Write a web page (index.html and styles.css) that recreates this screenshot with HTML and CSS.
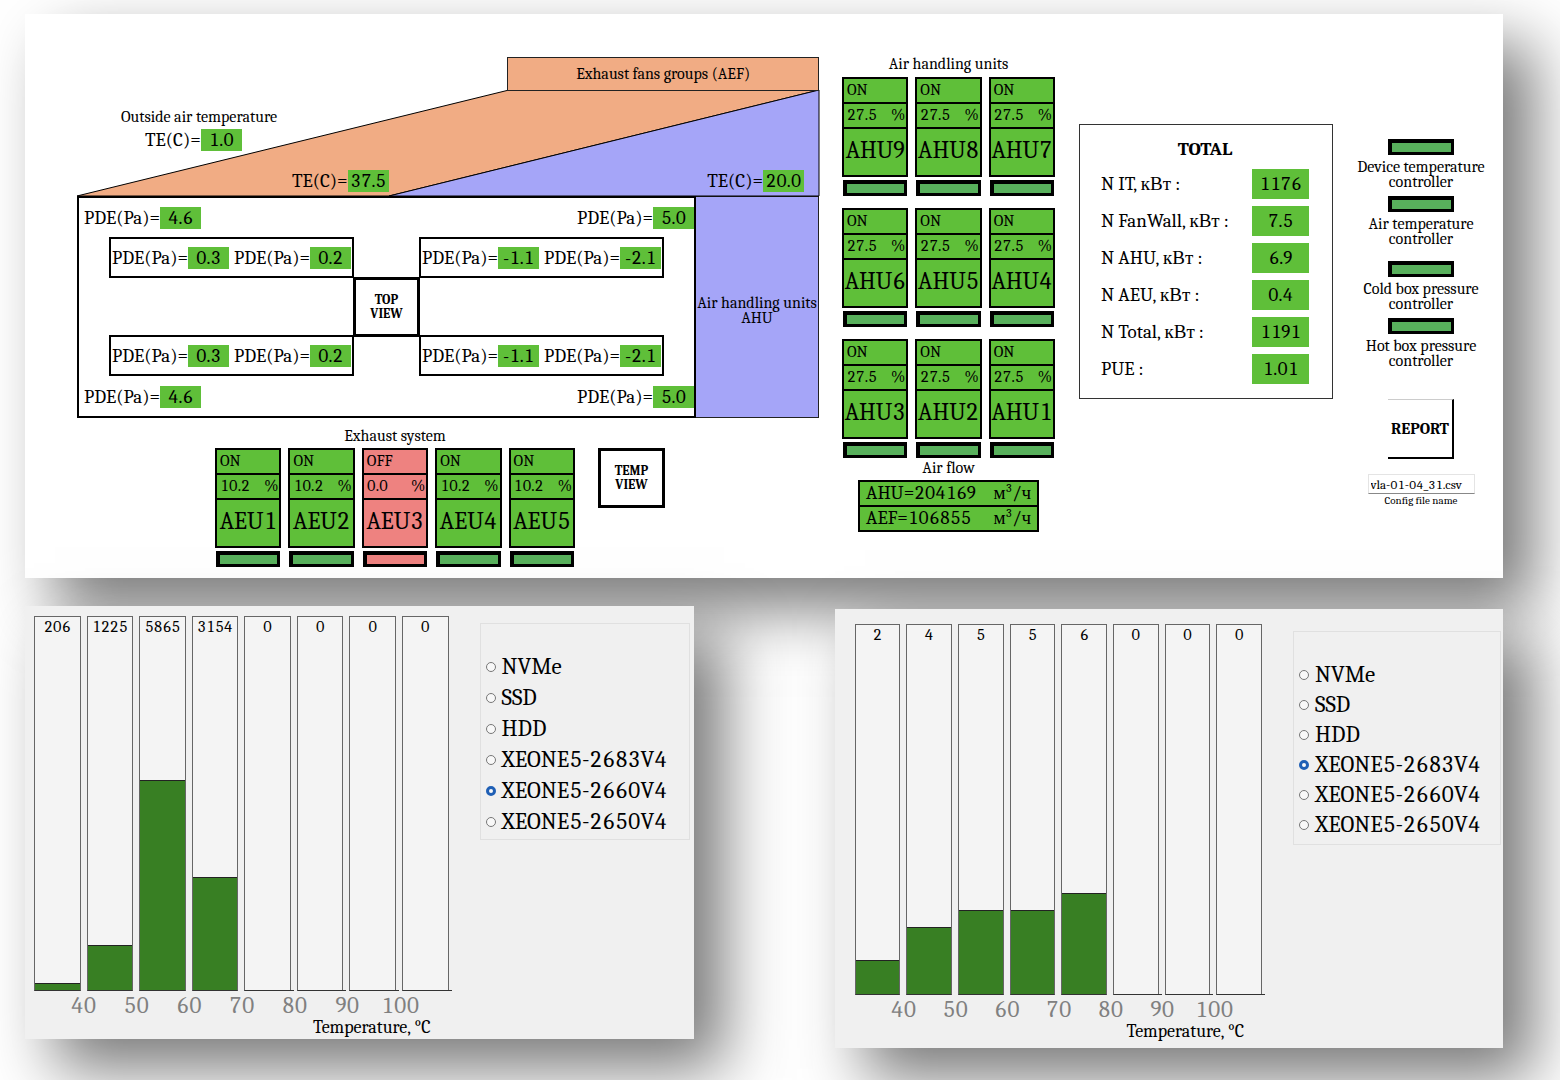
FILE: index.html
```html
<!DOCTYPE html>
<html lang="en">
<head>
<meta charset="utf-8">
<meta name="viewport" content="width=device-width, initial-scale=1">
<title>Air handling monitor</title>
<link rel="stylesheet" href="styles.css">
</head>
<body>
<main class="page">
  <section class="panel dashboard">
    <div class="plan-column">
      <div class="plan">
        <div class="roof">
          <svg class="roof-shape" viewBox="0 0 742 139" preserveAspectRatio="none" aria-hidden="true">
            <polygon class="duct-exhaust" points="0,139 432,33 742,33 312,139"/>
            <polygon class="duct-supply" points="312,139 742,33 742,139"/>
          </svg>
          <div class="aef">Exhaust fans groups (AEF)</div>
          <div class="outside">
            <div class="caption">Outside air temperature</div>
            <div class="reading"><span>TE(C)=</span><output class="value">1.0</output></div>
          </div>
          <div class="roof-readings">
            <div class="reading"><span>TE(C)=</span><output class="value">37.5</output></div>
            <div class="reading"><span>TE(C)=</span><output class="value">20.0</output></div>
          </div>
        </div>
        <div class="room">
          <div class="hall">
            <div class="hall-row">
              <div class="reading"><span>PDE(Pa)=</span><output class="value">4.6</output></div>
              <div class="reading"><span>PDE(Pa)=</span><output class="value">5.0</output></div>
            </div>
            <div class="racks">
              <div class="rack">
                <div class="reading"><span>PDE(Pa)=</span><output class="value">0.3</output></div>
                <div class="reading"><span>PDE(Pa)=</span><output class="value">0.2</output></div>
              </div>
              <div class="rack rack-right">
                <div class="reading"><span>PDE(Pa)=</span><output class="value">-1.1</output></div>
                <div class="reading"><span>PDE(Pa)=</span><output class="value">-2.1</output></div>
              </div>
              <button class="view-button top-view" type="button">TOP<br>VIEW</button>
              <div class="rack">
                <div class="reading"><span>PDE(Pa)=</span><output class="value">0.3</output></div>
                <div class="reading"><span>PDE(Pa)=</span><output class="value">0.2</output></div>
              </div>
              <div class="rack rack-right">
                <div class="reading"><span>PDE(Pa)=</span><output class="value">-1.1</output></div>
                <div class="reading"><span>PDE(Pa)=</span><output class="value">-2.1</output></div>
              </div>
            </div>
            <div class="hall-row">
              <div class="reading"><span>PDE(Pa)=</span><output class="value">4.6</output></div>
              <div class="reading"><span>PDE(Pa)=</span><output class="value">5.0</output></div>
            </div>
          </div>
          <div class="supply">Air handling units<br>AHU</div>
        </div>
      </div>
      <div class="exhaust">
        <div class="exhaust-group">
          <h2 class="caption">Exhaust system</h2>
          <div class="units units-five">
            <div class="unit"><div class="tile"><div>ON</div><div class="load"><span>10.2</span><span>%</span></div><div class="name">AEU1</div></div><div class="led"></div></div>
            <div class="unit"><div class="tile"><div>ON</div><div class="load"><span>10.2</span><span>%</span></div><div class="name">AEU2</div></div><div class="led"></div></div>
            <div class="unit unit-off"><div class="tile"><div>OFF</div><div class="load"><span>0.0</span><span>%</span></div><div class="name">AEU3</div></div><div class="led"></div></div>
            <div class="unit"><div class="tile"><div>ON</div><div class="load"><span>10.2</span><span>%</span></div><div class="name">AEU4</div></div><div class="led"></div></div>
            <div class="unit"><div class="tile"><div>ON</div><div class="load"><span>10.2</span><span>%</span></div><div class="name">AEU5</div></div><div class="led"></div></div>
          </div>
        </div>
        <button class="view-button" type="button">TEMP<br>VIEW</button>
      </div>
    </div>

    <div class="ahu-column">
      <h2 class="caption ahu-caption">Air handling units</h2>
      <div class="units">
        <div class="unit"><div class="tile"><div>ON</div><div class="load"><span>27.5</span><span>%</span></div><div class="name">AHU9</div></div><div class="led"></div></div>
        <div class="unit"><div class="tile"><div>ON</div><div class="load"><span>27.5</span><span>%</span></div><div class="name">AHU8</div></div><div class="led"></div></div>
        <div class="unit"><div class="tile"><div>ON</div><div class="load"><span>27.5</span><span>%</span></div><div class="name">AHU7</div></div><div class="led"></div></div>
        <div class="unit"><div class="tile"><div>ON</div><div class="load"><span>27.5</span><span>%</span></div><div class="name">AHU6</div></div><div class="led"></div></div>
        <div class="unit"><div class="tile"><div>ON</div><div class="load"><span>27.5</span><span>%</span></div><div class="name">AHU5</div></div><div class="led"></div></div>
        <div class="unit"><div class="tile"><div>ON</div><div class="load"><span>27.5</span><span>%</span></div><div class="name">AHU4</div></div><div class="led"></div></div>
        <div class="unit"><div class="tile"><div>ON</div><div class="load"><span>27.5</span><span>%</span></div><div class="name">AHU3</div></div><div class="led"></div></div>
        <div class="unit"><div class="tile"><div>ON</div><div class="load"><span>27.5</span><span>%</span></div><div class="name">AHU2</div></div><div class="led"></div></div>
        <div class="unit"><div class="tile"><div>ON</div><div class="load"><span>27.5</span><span>%</span></div><div class="name">AHU1</div></div><div class="led"></div></div>
      </div>
      <h2 class="caption">Air flow</h2>
      <div class="flow">
        <div class="flow-row"><span>AHU=204169</span><span>м<sup>3</sup>/ч</span></div>
        <div class="flow-row"><span>AEF=106855</span><span>м<sup>3</sup>/ч</span></div>
      </div>
    </div>

    <div class="total">
      <table class="total-table">
        <caption>TOTAL</caption>
        <tbody>
          <tr><th scope="row">N IT, кВт :</th><td>1176</td></tr>
          <tr><th scope="row">N FanWall, кВт :</th><td>7.5</td></tr>
          <tr><th scope="row">N AHU, кВт :</th><td>6.9</td></tr>
          <tr><th scope="row">N AEU, кВт :</th><td>0.4</td></tr>
          <tr><th scope="row">N Total, кВт :</th><td>1191</td></tr>
          <tr><th scope="row">PUE :</th><td>1.01</td></tr>
        </tbody>
      </table>
    </div>

    <div class="controllers">
      <div class="controller-pair">
        <div class="controller"><div class="led"></div>Device temperature<br>controller</div>
        <div class="controller"><div class="led"></div>Air temperature<br>controller</div>
      </div>
      <div class="controller-pair">
        <div class="controller"><div class="led"></div>Cold box pressure<br>controller</div>
        <div class="controller"><div class="led"></div>Hot box pressure<br>controller</div>
      </div>
      <button class="report" type="button">REPORT</button>
      <input class="config" id="config" type="text" value="vla-01-04_31.csv">
      <label class="config-label" for="config">Config file name</label>
    </div>
  </section>

  <div class="charts">
    <section class="panel chart">
      <div class="plot">
        <div class="bars">
          <div class="bar"><span>206</span><div class="fill" style="height:2%"></div></div>
          <div class="bar"><span>1225</span><div class="fill" style="height:12%"></div></div>
          <div class="bar"><span>5865</span><div class="fill" style="height:56.4%"></div></div>
          <div class="bar"><span>3154</span><div class="fill" style="height:30.4%"></div></div>
          <div class="bar bar-empty"><span>0</span></div>
          <div class="bar bar-empty"><span>0</span></div>
          <div class="bar bar-empty"><span>0</span></div>
          <div class="bar bar-empty"><span>0</span></div>
        </div>
        <div class="axis"><span>40</span><span>50</span><span>60</span><span>70</span><span>80</span><span>90</span><span>100</span></div>
        <div class="axis-title">Temperature, °C</div>
      </div>
      <fieldset class="devices">
        <label><input type="radio" name="left-device">NVMe</label>
        <label><input type="radio" name="left-device">SSD</label>
        <label><input type="radio" name="left-device">HDD</label>
        <label><input type="radio" name="left-device">XEONE5-2683V4</label>
        <label><input type="radio" name="left-device" checked>XEONE5-2660V4</label>
        <label><input type="radio" name="left-device">XEONE5-2650V4</label>
      </fieldset>
    </section>

    <section class="panel chart chart-small">
      <div class="plot">
        <div class="bars">
          <div class="bar"><span>2</span><div class="fill" style="height:9.1%"></div></div>
          <div class="bar"><span>4</span><div class="fill" style="height:18.2%"></div></div>
          <div class="bar"><span>5</span><div class="fill" style="height:22.8%"></div></div>
          <div class="bar"><span>5</span><div class="fill" style="height:22.8%"></div></div>
          <div class="bar"><span>6</span><div class="fill" style="height:27.4%"></div></div>
          <div class="bar bar-empty"><span>0</span></div>
          <div class="bar bar-empty"><span>0</span></div>
          <div class="bar bar-empty"><span>0</span></div>
        </div>
        <div class="axis"><span>40</span><span>50</span><span>60</span><span>70</span><span>80</span><span>90</span><span>100</span></div>
        <div class="axis-title">Temperature, °C</div>
      </div>
      <fieldset class="devices">
        <label><input type="radio" name="right-device">NVMe</label>
        <label><input type="radio" name="right-device">SSD</label>
        <label><input type="radio" name="right-device">HDD</label>
        <label><input type="radio" name="right-device" checked>XEONE5-2683V4</label>
        <label><input type="radio" name="right-device">XEONE5-2660V4</label>
        <label><input type="radio" name="right-device">XEONE5-2650V4</label>
      </fieldset>
    </section>
  </div>
</main>
</body>
</html>
```
FILE: styles.css
```css
:root {
  --green: #5fbf39;
  --led-green: #58b05c;
  --red: #ee8280;
  --orange: #f1ac84;
  --blue: #a5a5f8;
  --bar: #387f23;
}

*, *::before, *::after { box-sizing: border-box; }

html { background: #fff; }

body {
  margin: 0;
  color: #000;
  font-family: Cambria, "Liberation Serif", serif;
  font-size: 16px;
  font-variant-numeric: lining-nums tabular-nums;
  line-height: 16px;
}

button, input {
  font-family: inherit;
  font-variant-numeric: inherit;
  color: inherit;
}

.page {
  min-height: 100vh;
  padding: 14px 57px 32px 25px;
  overflow: hidden;
}

.panel { box-shadow: 30px 30px 60px rgba(0, 0, 0, 0.53); }

.caption {
  margin: 0;
  font-size: 16px;
  font-weight: 400;
  line-height: 20px;
  text-align: center;
}

/* Dashboard */
.dashboard {
  display: grid;
  grid-template-columns: minmax(742px, 1fr) 213px 255px 130px;
  column-gap: 23px;
  align-items: start;
  padding: 43px 17px 11px 52px;
  background: #fff;
}

.roof {
  position: relative;
  display: flex;
  flex-direction: column;
  height: 139px;
}

.roof-shape {
  position: absolute;
  top: 0;
  left: 0;
  width: 100%;
  height: 139px;
  overflow: visible;
}

.roof-shape polygon {
  stroke: #000;
  stroke-width: 1px;
  vector-effect: non-scaling-stroke;
}

.duct-exhaust { fill: var(--orange); }
.duct-supply { fill: var(--blue); }

.aef {
  position: relative;
  width: 42%;
  margin-left: auto;
  padding: 7px;
  border: 1px solid #222;
  background: var(--orange);
  text-align: center;
  line-height: 18px;
}

.outside {
  position: relative;
  align-self: flex-start;
  margin: 16px 0 0 44px;
}

.outside .reading {
  margin-top: 2px;
  padding-left: 24px;
}

.roof-readings {
  position: relative;
  display: grid;
  grid-template-columns: 42% 58%;
  margin-top: auto;
  padding-bottom: 4px;
}

.roof-readings .reading { justify-content: flex-end; }
.roof-readings .reading + .reading { padding-right: 15px; }

.reading {
  display: flex;
  align-items: center;
  font-size: 19px;
  line-height: 22px;
}

.value {
  width: 41px;
  height: 22px;
  background: var(--green);
  text-align: center;
}

.room {
  display: grid;
  grid-template-columns: 1fr 123px;
}

.hall {
  padding: 9px 0 8px 5px;
  border: 2px solid #000;
}

.hall-row {
  display: flex;
  justify-content: space-between;
}

.racks {
  display: grid;
  grid-template-columns: 1fr 65px 1fr;
  grid-template-rows: 41px 57px 41px;
  margin: 8px 30px 10px 25px;
}

.rack {
  grid-column: 1;
  display: flex;
  align-items: center;
  justify-content: space-between;
  padding: 0 1px;
  border: 2px solid #000;
}

.rack-right { grid-column: 3; }

.view-button {
  width: 67px;
  height: 60px;
  padding: 0;
  border: 3px solid #000;
  background: #fff;
  font-size: 13px;
  font-weight: 700;
  line-height: 14px;
}

.top-view {
  grid-column: 2;
  place-self: center;
}

.supply {
  display: flex;
  align-items: center;
  justify-content: center;
  padding-top: 8px;
  border: 1px solid #222;
  border-left: 0;
  background: var(--blue);
  line-height: 15px;
  text-align: center;
}

.exhaust {
  display: flex;
  gap: 23px;
  align-items: flex-start;
  padding: 8px 0 0 138px;
}

.exhaust > .view-button { margin-top: 22px; }

/* Unit tiles */
.units {
  display: grid;
  grid-template-columns: repeat(3, 1fr);
  gap: 12px 7px;
}

.units-five {
  grid-template-columns: repeat(5, 1fr);
  width: 360px;
  margin-top: 2px;
}

.tile {
  height: 100px;
  border: 2px solid #000;
  background: var(--green);
  font-size: 16px;
  line-height: 23px;
}

.tile > div { padding: 0 3px; }
.tile > div + div { border-top: 2px solid #000; }

.tile > .load {
  display: flex;
  justify-content: space-between;
  padding-right: 1px;
}

.tile > .name {
  padding: 0;
  font-size: 24px;
  line-height: 42px;
  text-align: center;
}

.led {
  height: 16px;
  margin: 3px 1px 0;
  border: 4px solid #000;
  border-width: 4px 3px 3px 4px;
  background: var(--led-green);
}

.unit-off .tile, .unit-off .led { background: var(--red); }

.ahu-caption {
  margin-bottom: 6px;
  line-height: 14px;
}

.flow {
  margin: 2px 16px 0;
  border: 2px solid #000;
  background: var(--green);
  font-size: 19px;
}

.flow-row {
  display: flex;
  justify-content: space-between;
  padding: 0 6px;
  line-height: 23px;
}

.flow-row + .flow-row { border-top: 2px solid #000; }

.flow-row sup {
  font-size: 12px;
  line-height: 0;
}

/* Totals */
.total {
  margin: 67px 0 0 1px;
  padding: 15px 23px 7px 21px;
  border: 1px solid #333;
}

.total-table {
  width: 100%;
  border-spacing: 0 7px;
  font-size: 19px;
}

.total-table caption {
  font-weight: 700;
  line-height: 18px;
  padding-bottom: 4px;
}

.total-table th {
  padding: 0;
  font-weight: 400;
  text-align: left;
}

.total-table td {
  width: 57px;
  height: 30px;
  padding: 0;
  background: var(--green);
  text-align: center;
}

/* Controllers */
.controllers {
  display: flex;
  flex-direction: column;
  align-items: center;
  padding-top: 82px;
}

.controller-pair { margin-bottom: 8px; }

.controller {
  height: 57px;
  line-height: 15px;
  text-align: center;
}

.controller .led {
  width: 66px;
  margin: 0 auto 5px;
}

.report {
  width: 66px;
  height: 60px;
  margin-top: 16px;
  padding: 0;
  border: solid #000;
  border-width: 1px 2px 2px 0;
  border-top-color: #ccc;
  background: #fff;
  font-size: 16px;
  font-weight: 700;
}

.config {
  width: 107px;
  height: 20px;
  margin-top: 15px;
  padding: 0 2px;
  border: 1px solid #e4e4e4;
  border-bottom-color: #888;
  background: #fff;
  font-size: 13px;
}

.config-label {
  font-size: 11px;
  line-height: 14px;
}

/* Histograms */
.charts {
  display: grid;
  grid-template-columns: 1fr 1fr;
  column-gap: 141px;
  align-items: start;
  margin-top: 28px;
}

.chart {
  display: grid;
  grid-template-columns: 1fr 210px;
  column-gap: 25px;
  align-items: start;
  padding: 10px 4px 4px 9px;
  background: #f0f0f0;
}

.bars {
  display: grid;
  grid-template-columns: repeat(8, 1fr);
  height: 375px;
}

.bar {
  position: relative;
  margin-right: 6px;
  border: 1px solid #666;
  border-bottom-color: #333;
  background: #f4f4f4;
  line-height: 21px;
  text-align: center;
}

.fill {
  position: absolute;
  right: 0;
  bottom: 0;
  left: 0;
  border-top: 1px solid #222;
  background: var(--bar);
}

/* Baseline runs slightly past an empty bar */
.bar-empty::after {
  content: "";
  position: absolute;
  right: -4px;
  bottom: -1px;
  left: 0;
  height: 1px;
  background: #333;
}

.axis {
  display: grid;
  grid-template-columns: repeat(7, 1fr);
  padding: 0 28px 0 23px;
  color: #808080;
  font-size: 23px;
  line-height: 30px;
  text-align: center;
}

.axis-title {
  padding-right: 24px;
  font-size: 18px;
  line-height: 14px;
  text-align: right;
}

.devices {
  display: grid;
  min-width: 0;
  margin: 7px 0 0;
  padding: 27px 5px 2px;
  border: 1px solid #e0e0e0;
}

.devices label {
  display: flex;
  align-items: center;
  gap: 6px;
  font-size: 23px;
  line-height: 31px;
}

.devices input {
  width: 10px;
  height: 10px;
  margin: 0;
  border: 1px solid #777;
  border-radius: 50%;
  background: #f8f8f8;
  appearance: none;
}

.devices input:checked { border: 3px solid #1f5fb5; }

.chart-small {
  grid-template-columns: 1fr 208px;
  margin-top: 3px;
  padding: 15px 2px 9px 20px;
}

.chart-small .bars { height: 371px; }

.chart-small .devices { padding: 28px 5px 4px; }

.chart-small .devices label { line-height: 30px; }
```
